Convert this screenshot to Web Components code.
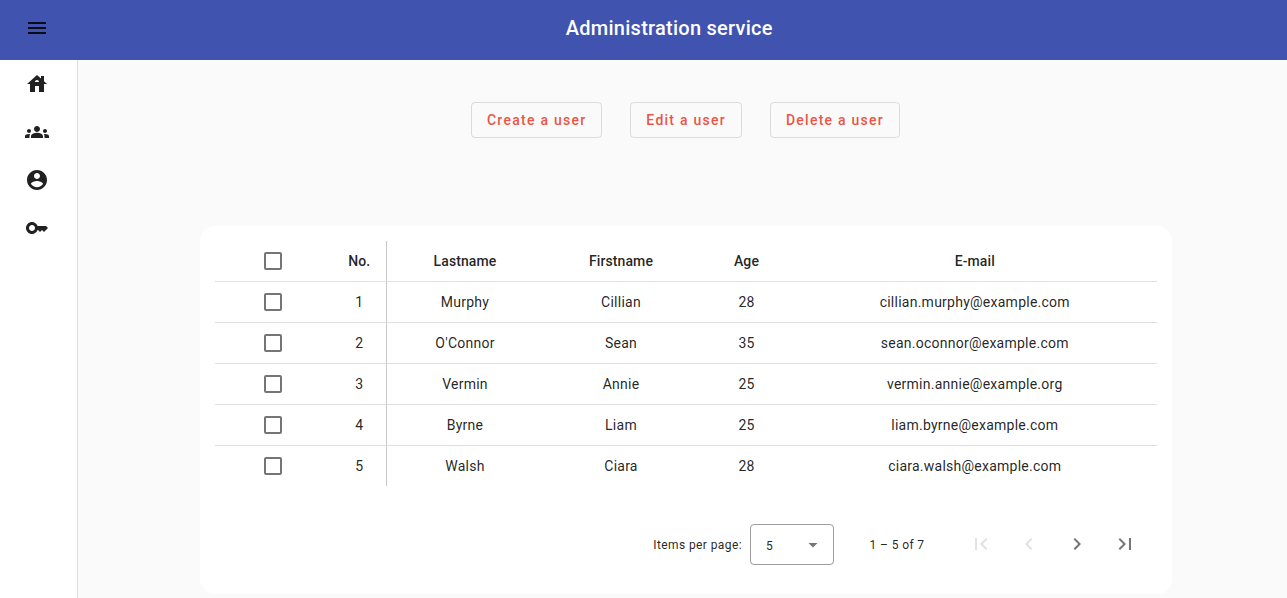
<!DOCTYPE html>
<html lang="en">
<head>
<meta charset="utf-8">
<title>Administration service</title>
<style>
body { margin: 0; font-family: Roboto, "Liberation Sans", sans-serif; font-size: 14px; color: rgba(0,0,0,.87); background: #fafafa; overflow: hidden; }
</style>
</head>
<body>
<admin-app></admin-app>
<script>
const ICONS = {
  menu: 'M3 18h18v-2H3v2zm0-5h18v-2H3v2zm0-7v2h18V6H3z',
  house: 'M19 9.3V4h-3v2.6L12 3 2 12h3v8h5v-6h4v6h5v-8h3l-3-2.7zm-9 .7c0-1.1.9-2 2-2s2 .9 2 2h-4z',
  groups: 'M12 12.75c1.63 0 3.07.39 4.24.9 1.08.48 1.76 1.56 1.76 2.73V18H6v-1.61c0-1.18.68-2.26 1.76-2.73 1.17-.52 2.61-.91 4.24-.91zM4 13c1.1 0 2-.9 2-2s-.9-2-2-2-2 .9-2 2 .9 2 2 2zm1.13 1.1C4.76 14.04 4.39 14 4 14c-.99 0-1.93.21-2.78.58C.48 14.9 0 15.62 0 16.43V18h4.5v-1.61c0-.83.23-1.61.63-2.29zM20 13c1.1 0 2-.9 2-2s-.9-2-2-2-2 .9-2 2 .9 2 2 2zm4 3.43c0-.81-.48-1.53-1.22-1.85C21.93 14.21 20.99 14 20 14c-.39 0-.76.04-1.13.1.4.68.63 1.46.63 2.29V18H24v-1.57zM12 6c1.66 0 3 1.34 3 3s-1.34 3-3 3-3-1.34-3-3 1.34-3 3-3z',
  account: 'M12 2C6.48 2 2 6.48 2 12s4.48 10 10 10 10-4.48 10-10S17.52 2 12 2zm0 3c1.66 0 3 1.34 3 3s-1.34 3-3 3-3-1.34-3-3 1.34-3 3-3zm0 14.2c-2.5 0-4.71-1.28-6-3.22.03-1.99 4-3.08 6-3.08 1.99 0 5.97 1.09 6 3.08-1.29 1.94-3.5 3.22-6 3.22z',
  key: 'M21 10h-8.35C11.83 7.67 9.61 6 7 6c-3.31 0-6 2.69-6 6s2.69 6 6 6c2.61 0 4.83-1.67 5.65-4H13l2 2 2-2 2 2 4-4.04L21 10zM7 15c-1.65 0-3-1.35-3-3s1.35-3 3-3 3 1.35 3 3-1.35 3-3 3z',
  first: 'M18.41 16.59L13.82 12l4.59-4.59L17 6l-6 6 6 6zM6 6h2v12H6z',
  prev: 'M15.41 7.41L14 6l-6 6 6 6 1.41-1.41L10.83 12z',
  next: 'M10 6L8.59 7.41 13.17 12l-4.58 4.59L10 18l6-6z',
  last: 'M5.59 7.41L10.18 12l-4.59 4.59L7 18l6-6-6-6zM16 6h2v12h-2z'
};

function define(name, html) {
  customElements.define(name, class extends HTMLElement {
    constructor() {
      super();
      this.attachShadow({ mode: 'open' }).innerHTML = html;
    }
  });
}

customElements.define('md-icon', class extends HTMLElement {
  connectedCallback() {
    if (this.shadowRoot) return;
    this.attachShadow({ mode: 'open' }).innerHTML = `
      <style>:host{display:block;width:24px;height:24px}svg{display:block;fill:currentColor}</style>
      <svg width="24" height="24" viewBox="0 0 24 24"><path d="${ICONS[this.getAttribute('name')]}"/></svg>`;
  }
});

define('app-bar', `
  <style>
    :host{display:flex;align-items:center;height:60px;box-sizing:border-box;padding:0 0 4px 25px;background:#4053af}
    md-icon{color:rgba(0,0,0,.87)}
    h1{flex:1;margin:0 0 0 2.5px;text-align:center;font-size:20px;line-height:32px;font-weight:500;letter-spacing:.25px;color:#fff}
  </style>
  <md-icon name="menu"></md-icon><h1><slot></slot></h1>`);

define('side-nav', `
  <style>
    :host{display:flex;flex-direction:column;gap:24px;width:78px;box-sizing:border-box;padding:12px 0 0 25px;background:#fff;border-right:1px solid rgba(0,0,0,.12)}
  </style>
  <md-icon name="house"></md-icon><md-icon name="groups"></md-icon><md-icon name="account"></md-icon><md-icon name="key"></md-icon>`);

define('stroked-button', `
  <style>
    :host{display:block}
    button{display:block;height:36px;box-sizing:border-box;margin:0;padding:0 15px;border:1px solid rgba(0,0,0,.12);border-radius:4px;background:transparent;font:500 14px/34px Roboto,"Liberation Sans",sans-serif;letter-spacing:1.25px;color:#eb5545}
  </style>
  <button type="button"><slot></slot></button>`);

define('check-box', `
  <style>:host{display:block;width:18px;height:18px;box-sizing:border-box;border:2px solid rgba(0,0,0,.54);border-radius:2px}</style>`);

customElements.define('user-table', class extends HTMLElement {
  connectedCallback() {
    const rows = [
      ['Murphy', 'Cillian', 28, 'cillian.murphy@example.com'],
      ["O'Connor", 'Sean', 35, 'sean.oconnor@example.com'],
      ['Vermin', 'Annie', 25, 'vermin.annie@example.org'],
      ['Byrne', 'Liam', 25, 'liam.byrne@example.com'],
      ['Walsh', 'Ciara', 28, 'ciara.walsh@example.com']
    ];
    const row = (cells, cls = '') => `<div class="row ${cls}"><div><check-box></check-box></div>${cells.map(c => `<div>${c}</div>`).join('')}</div>`;
    this.attachShadow({ mode: 'open' }).innerHTML = `
      <style>
        :host{display:block;font-size:14px;letter-spacing:.25px}
        .row{display:grid;grid-template-columns:116px 56px 156px 156px 95px 363px;height:41px}
        .row:last-child{height:40px}
        .row>div{display:flex;align-items:center;justify-content:center;border-bottom:1px solid rgba(0,0,0,.12)}
        .row:last-child>div{border-bottom:0}
        .row>div:nth-child(2){padding-left:1.5px;border-right:1px solid rgba(0,0,0,.22)}
        .row>div:nth-child(6){padding-right:1.5px;box-sizing:border-box}
        .head{font-weight:500;letter-spacing:.1px}
      </style>
      ${row(['No.', 'Lastname', 'Firstname', 'Age', 'E-mail'], 'head')}
      ${rows.map((r, i) => row([i + 1, ...r])).join('')}`;
  }
});

define('table-paginator', `
  <style>
    :host{display:flex;align-items:center;justify-content:flex-end;height:56px;padding-right:8px;font-size:12px;line-height:20px;letter-spacing:.4px}
    .label{padding-top:2px}
    .select{display:flex;align-items:center;justify-content:space-between;width:84px;height:41px;box-sizing:border-box;margin:0 35.5px 0 8px;padding:2px 15px 0;border:1px solid rgba(0,0,0,.38);border-radius:4px}
    .value{padding-top:1px}
    .arrow{width:10px;height:5px;background:rgba(0,0,0,.54);clip-path:polygon(0 0,100% 0,50% 100%)}
    .nav{display:flex;margin-left:32.5px;color:rgba(0,0,0,.54)}
    .nav md-icon{padding:12px}
    .off{color:rgba(0,0,0,.12)}
  </style>
  <span class="label">Items per page:</span>
  <div class="select"><span class="value">5</span><span class="arrow"></span></div>
  <span class="label">1 – 5 of 7</span>
  <div class="nav"><md-icon class="off" name="first"></md-icon><md-icon class="off" name="prev"></md-icon><md-icon name="next"></md-icon><md-icon name="last"></md-icon></div>`);

define('data-card', `
  <style>:host{display:block;width:972px;height:368px;box-sizing:border-box;padding:15px;border-radius:15px;background:#fff}table-paginator{margin-top:30px}</style>
  <slot></slot><table-paginator></table-paginator>`);

define('admin-app', `
  <style>
    :host{display:flex;flex-direction:column;height:598px}
    .body{display:flex;flex:1;min-height:0}
    main{flex:1;display:flex;flex-direction:column;align-items:center;padding:42px 0 0 7px}
    .actions{display:flex;gap:28px;margin:0 1px 88px 0}
  </style>
  <app-bar>Administration service</app-bar>
  <div class="body">
    <side-nav></side-nav>
    <main>
      <div class="actions"><stroked-button>Create a user</stroked-button><stroked-button>Edit a user</stroked-button><stroked-button>Delete a user</stroked-button></div>
      <data-card><user-table></user-table></data-card>
    </main>
  </div>`);
</script>
</body>
</html>
